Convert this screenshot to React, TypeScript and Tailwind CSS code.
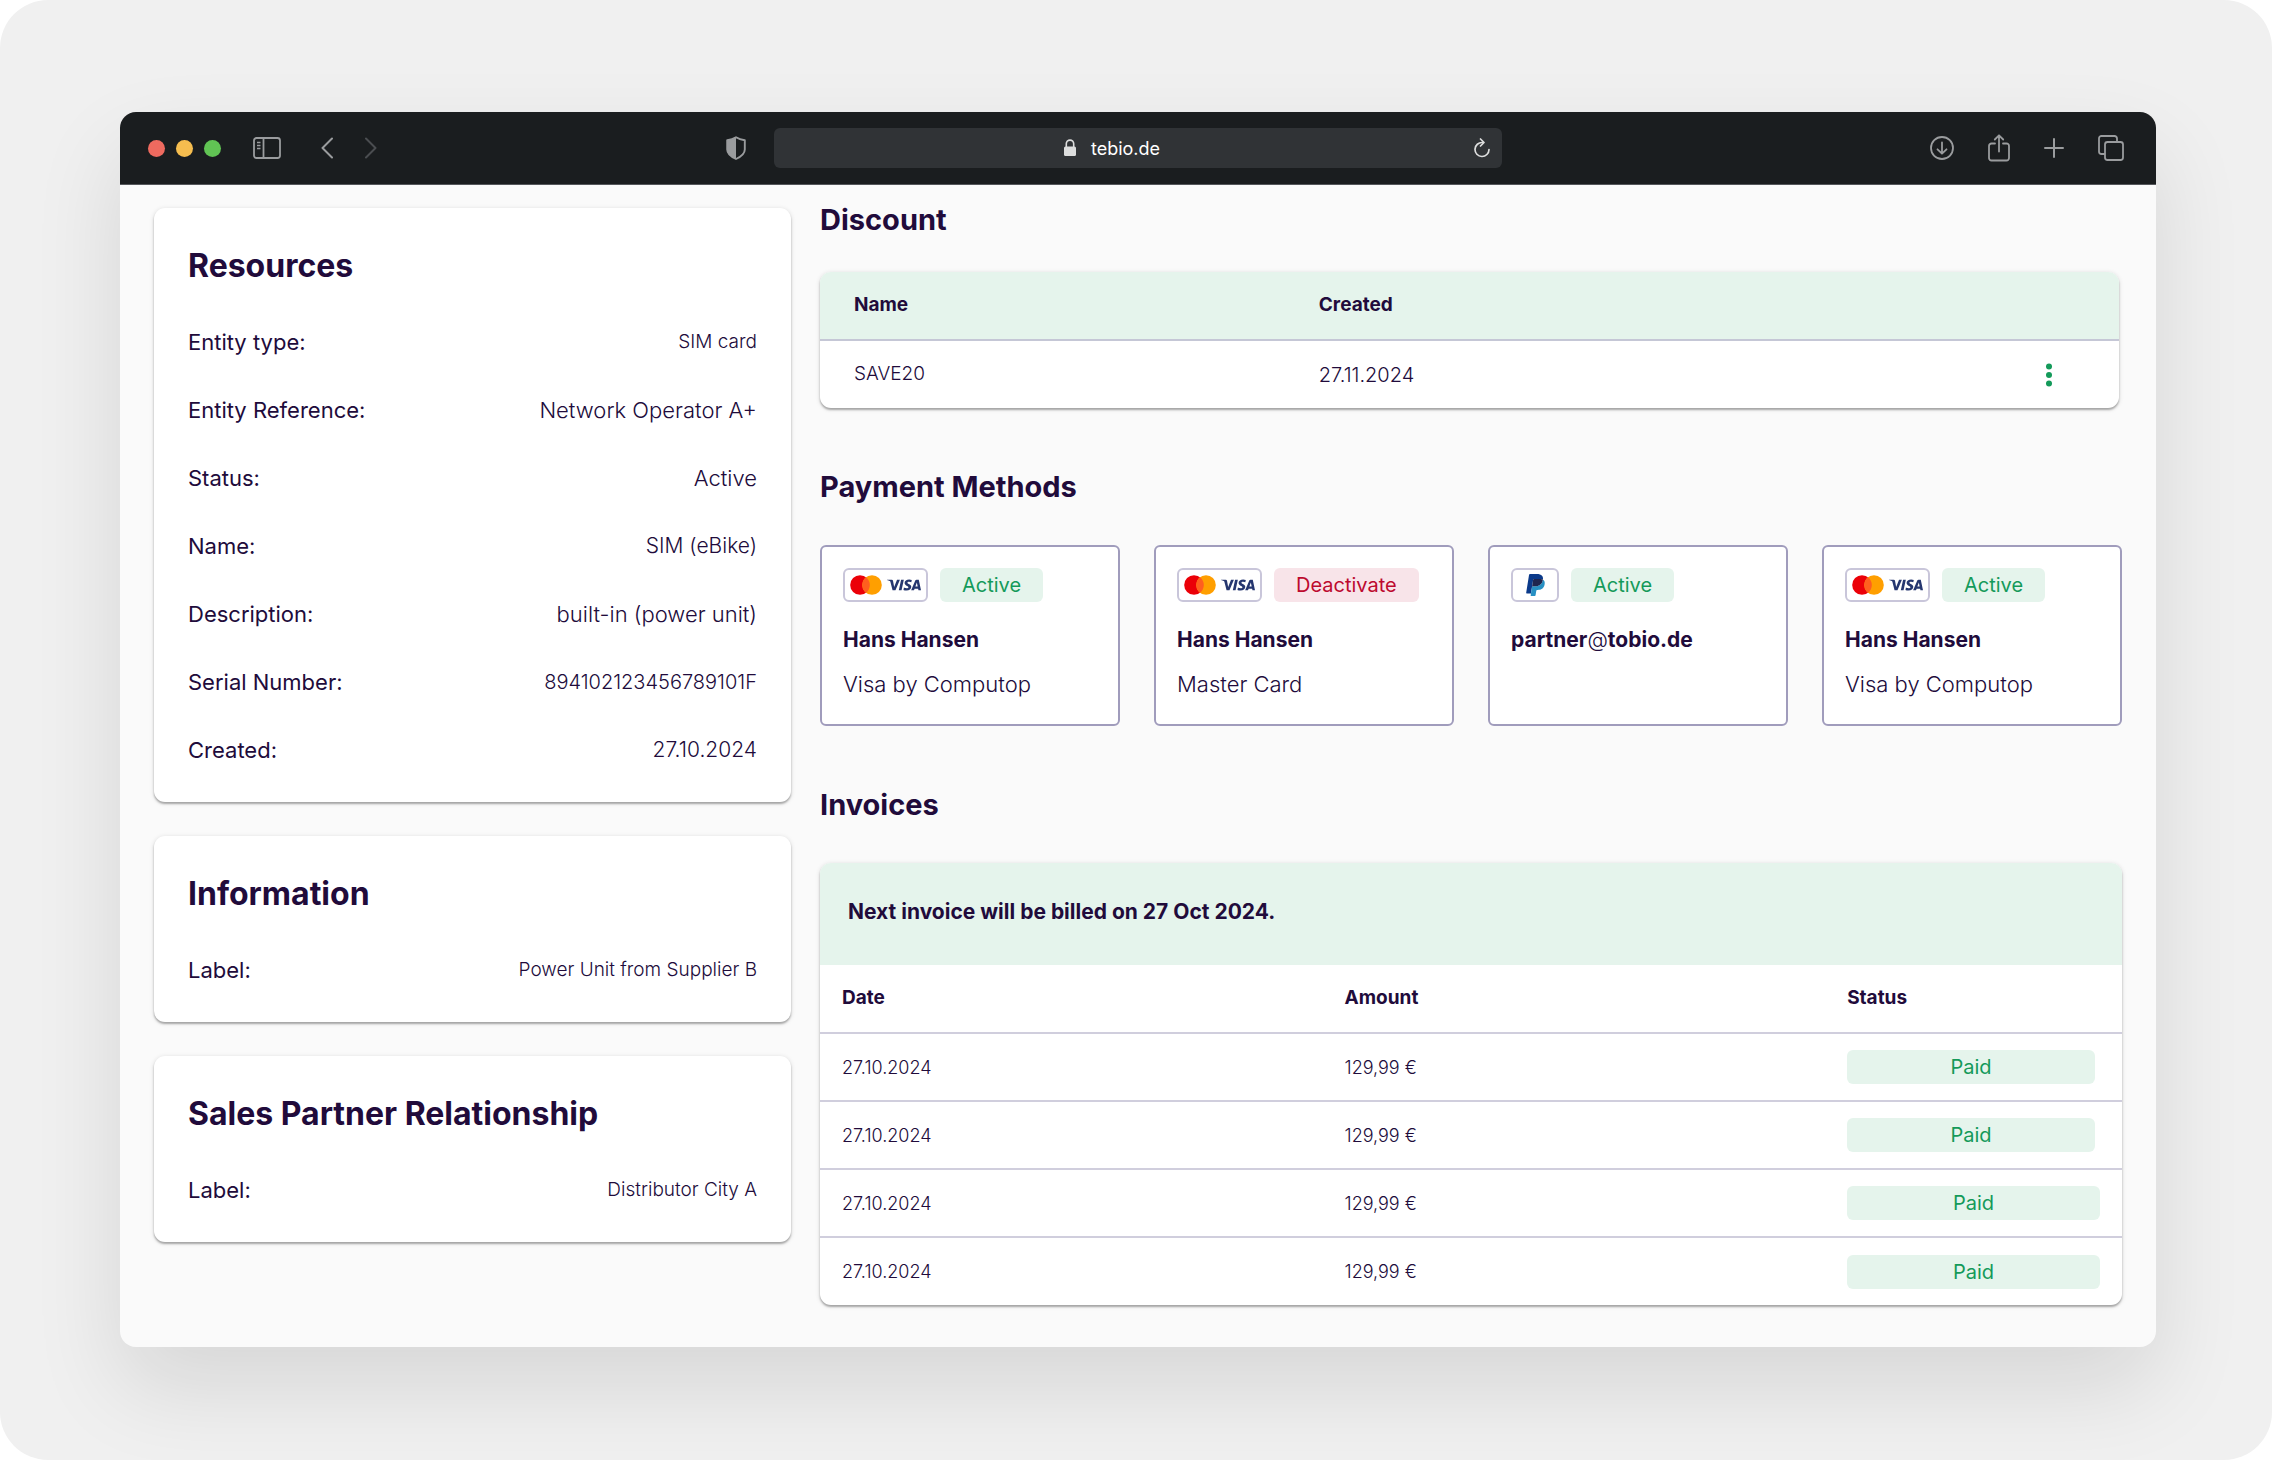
import type { ReactNode } from "react";
import clsx from "clsx";
import { SiVisa } from "react-icons/si";

const resources = [
  { label: "Entity type:", value: "SIM card", size: "text-[19px]" },
  { label: "Entity Reference:", value: "Network Operator A+", size: "text-[22px]" },
  { label: "Status:", value: "Active", size: "text-[22px]" },
  { label: "Name:", value: "SIM (eBike)", size: "text-[21px]" },
  { label: "Description:", value: "built-in (power unit)", size: "text-[22px]" },
  { label: "Serial Number:", value: "894102123456789101F", size: "text-[20px]" },
  { label: "Created:", value: "27.10.2024", size: "text-[21px]" },
];

const information = [
  { label: "Label:", value: "Power Unit from Supplier B", size: "text-[19px]" },
];

const salesPartner = [
  { label: "Label:", value: "Distributor City A", size: "text-[19px]" },
];

const payments = [
  { brand: "card", active: true, name: "Hans Hansen", detail: "Visa by Computop" },
  { brand: "card", active: false, name: "Hans Hansen", detail: "Master Card" },
  { brand: "paypal", active: true, name: "partner@tobio.de", detail: "" },
  { brand: "card", active: true, name: "Hans Hansen", detail: "Visa by Computop" },
];

const invoices = [
  { date: "27.10.2024", amount: "129,99 €", wide: false },
  { date: "27.10.2024", amount: "129,99 €", wide: false },
  { date: "27.10.2024", amount: "129,99 €", wide: true },
  { date: "27.10.2024", amount: "129,99 €", wide: true },
];

const cardShadow =
  "shadow-[0_2px_2px_rgba(0,0,0,0.28),0_1px_5px_rgba(0,0,0,0.14)]";

function BrowserBar() {
  return (
    <header className="flex items-center h-[73px] px-7 bg-[#1a1d1f] border-b border-[#55575b] text-[#9a9c9e]">
      <div className="flex flex-1 items-center pr-1">
        <div className="flex gap-[11px]">
          <span className="w-[17px] h-[17px] rounded-full bg-[#ee6a5f]" />
          <span className="w-[17px] h-[17px] rounded-full bg-[#f5bd4f]" />
          <span className="w-[17px] h-[17px] rounded-full bg-[#61c454]" />
        </div>
        <button type="button" aria-label="Sidebar" className="ml-8">
          <svg width="28" height="22" viewBox="0 0 28 22" fill="none" stroke="currentColor" strokeWidth="1.8">
            <rect x="1" y="1" width="26" height="20" rx="2.5" />
            <path d="M10.5 1v20" />
            <path d="M4 5.5h3.5M4 8.5h3.5M4 11.5h3.5" strokeWidth="1.4" />
          </svg>
        </button>
        <button type="button" aria-label="Back" className="ml-10">
          <svg width="12" height="22" viewBox="0 0 12 22" fill="none" stroke="currentColor" strokeWidth="2" strokeLinecap="round" strokeLinejoin="round">
            <path d="M11 1.5L1.5 11l9.5 9.5" />
          </svg>
        </button>
        <button type="button" aria-label="Forward" className="ml-8 text-[#4a4d50]">
          <svg width="12" height="22" viewBox="0 0 12 22" fill="none" stroke="currentColor" strokeWidth="2" strokeLinecap="round" strokeLinejoin="round">
            <path d="M1 1.5l9.5 9.5L1 20.5" />
          </svg>
        </button>
        <button type="button" aria-label="Privacy report" className="ml-auto mr-6">
          <svg width="20" height="24" viewBox="0 0 20 24" fill="none">
            <path
              d="M10 1.2c2.6 1.7 5.4 2.6 8.8 3v9.3c0 4.2-3.4 7-8.8 9.5-5.4-2.5-8.8-5.3-8.8-9.5V4.2c3.4-.4 6.2-1.3 8.8-3z"
              stroke="currentColor"
              strokeWidth="1.9"
              strokeLinejoin="round"
            />
            <path d="M10 1.2v21.8c-5.4-2.5-8.8-5.3-8.8-9.5V4.2c3.4-.4 6.2-1.3 8.8-3z" fill="currentColor" />
          </svg>
        </button>
      </div>

      <div className="flex items-center w-[728px] h-10 px-3 rounded-md bg-[#303336] text-[#dcdddd]">
        <div className="flex flex-1 items-center justify-center gap-[15px] pr-9">
          <svg width="12" height="18" viewBox="0 0 12 18" fill="none">
            <rect x="0" y="7.5" width="12" height="9.5" rx="1.5" fill="currentColor" />
            <path d="M2.3 8V4.800a3.7 3.7 0 0 1 7.4 0V8" stroke="currentColor" strokeWidth="1.6" />
          </svg>
          <span className="text-[18px] text-white">tebio.de</span>
        </div>
        <button type="button" aria-label="Reload">
          <svg width="16" height="20" viewBox="0 0 16 20" fill="none" stroke="currentColor" strokeWidth="1.7" strokeLinecap="round" strokeLinejoin="round">
            <path d="M8.5 4.5a7 7 0 1 0 6.5 7" />
            <path d="M6.5 1l3.5 3.5L6.5 8" />
          </svg>
        </button>
      </div>

      <div className="flex flex-1 items-center justify-end gap-[34px] pr-1">
        <button type="button" aria-label="Downloads">
          <svg width="24" height="24" viewBox="0 0 24 24" fill="none" stroke="currentColor" strokeWidth="1.8" strokeLinecap="round" strokeLinejoin="round">
            <circle cx="12" cy="12" r="11" />
            <path d="M12 6.5v11M7.5 13.3l4.5 4.4 4.5-4.4" />
          </svg>
        </button>
        <button type="button" aria-label="Share">
          <svg width="22" height="28" viewBox="0 0 22 28" fill="none" stroke="currentColor" strokeWidth="1.8" strokeLinecap="round" strokeLinejoin="round">
            <path d="M7 9.5H3.5A2.5 2.5 0 0 0 1 12v12a2.5 2.5 0 0 0 2.5 2.5h15A2.5 2.5 0 0 0 21 24V12a2.5 2.5 0 0 0-2.5-2.5H15" />
            <path d="M11 17.5V1.5M6.8 5.5L11 1.3l4.2 4.2" />
          </svg>
        </button>
        <button type="button" aria-label="New tab">
          <svg width="20" height="20" viewBox="0 0 20 20" stroke="currentColor" strokeWidth="2" strokeLinecap="round">
            <path d="M10 1v18M1 10h18" />
          </svg>
        </button>
        <button type="button" aria-label="Tab overview">
          <svg width="26" height="26" viewBox="0 0 26 26" fill="none" stroke="currentColor" strokeWidth="1.8" strokeLinejoin="round">
            <rect x="7" y="7" width="18" height="18" rx="2.5" />
            <path d="M7 19H3.5A2.5 2.5 0 0 1 1 16.5v-13A2.5 2.5 0 0 1 3.5 1h13A2.5 2.5 0 0 1 19 3.5V7" />
          </svg>
        </button>
      </div>
    </header>
  );
}

type Detail = { label: string; value: string; size: string };

function DetailCard({ title, items }: { title: string; items: Detail[] }) {
  return (
    <section className={clsx("bg-white rounded-[11px] px-[34px] pt-[34px] pb-[18px]", cardShadow)}>
      <h2 className="text-[32px] leading-12 font-bold mb-[18px]">{title}</h2>
      <dl>
        {items.map((item) => (
          <div key={item.label} className="flex items-center justify-between h-[68px]">
            <dt className="text-[22px]">{item.label}</dt>
            <dd className={clsx("font-light", item.size)}>{item.value}</dd>
          </div>
        ))}
      </dl>
    </section>
  );
}

function SectionTitle({ children }: { children: ReactNode }) {
  return <h2 className="text-[29px] leading-10 font-bold">{children}</h2>;
}

function CardLogo() {
  return (
    <span className="flex items-center justify-between w-[85px] h-[34px] px-[5px] bg-white border-2 border-[#c9c6da] rounded-md">
      <svg width="32" height="20" viewBox="0 0 32 20" aria-label="Mastercard">
        <circle cx="10" cy="10" r="9.8" fill="#eb0008" />
        <circle cx="22" cy="10" r="9.8" fill="#ff9f00" />
        <path d="M16 2.25a9.8 9.8 0 0 1 0 15.5a9.8 9.8 0 0 1 0-15.5z" fill="#ff5f1f" />
      </svg>
      <SiVisa className="w-[34px] h-[34px] text-[#25366f]" aria-label="Visa" />
    </span>
  );
}

function PaypalLogo() {
  return (
    <span className="flex items-center justify-center w-12 h-[34px] bg-white border-2 border-[#c9c6da] rounded-md">
      <svg width="19" height="22" viewBox="0 0 256 302" aria-label="PayPal">
        <path
          d="M102.397 68.840a11.737 11.737 0 0 1 5.053-1.140h73.318c8.682 0 16.780.565 24.180 1.756a101.600 101.600 0 0 1 6.177 1.182 89.928 89.928 0 0 1 8.590 2.347c3.638 1.215 7.026 2.630 10.140 4.287 3.670-23.416-.026-39.340-12.687-53.765C203.226 7.625 178.046.816 145.823.816H52.295C45.710.816 40.108 5.610 39.076 12.110L.136 259.068c-.774 4.878 2.997 9.282 7.925 9.282h57.744L95.888 77.580a11.717 11.717 0 0 1 6.509-8.740z"
          fill="#0b3a8a"
        />
        <path
          d="M228.897 82.749c-12.328 63.320-54.530 85.221-108.429 85.221H93.024c-6.584 0-12.145 4.795-13.168 11.296L61.817 293.621c-.674 4.262 2.622 8.124 6.934 8.124h48.670a11.710 11.710 0 0 0 11.563-9.880l.474-2.480 9.173-58.136.591-3.213a11.710 11.710 0 0 1 11.562-9.880h7.284c47.147 0 84.064-19.154 94.852-74.550 4.503-23.150 2.173-42.478-9.739-56.054-3.613-4.112-8.100-7.508-13.327-10.280-.283 1.790-.590 3.604-.957 5.477z"
          fill="#2790c3"
        />
        <path
          d="M216.952 72.128a89.928 89.928 0 0 0-5.818-1.490 109.904 109.904 0 0 0-6.177-1.174c-7.408-1.199-15.500-1.765-24.190-1.765h-73.309a11.570 11.570 0 0 0-5.053 1.149 11.683 11.683 0 0 0-6.510 8.740l-15.582 98.798-.450 2.880c1.025-6.501 6.585-11.296 13.170-11.296h27.444c53.898 0 96.100-21.892 108.428-85.221.367-1.873.675-3.688.958-5.477-3.122-1.648-6.501-3.072-10.140-4.279a83.260 83.260 0 0 0-2.770-.865"
          fill="#1f264f"
        />
      </svg>
    </span>
  );
}

function DiscountTable() {
  return (
    <div className={clsx("mr-[3px] rounded-[11px] overflow-hidden bg-white", cardShadow)}>
      <table className="w-full table-fixed text-left">
        <thead>
          <tr className="h-[68px] bg-[#e5f4ec] border-b-2 border-[#c5c7d6] text-[19px]">
            <th className="w-[38.4%] pl-[34px] font-bold">Name</th>
            <th className="font-bold">Created</th>
            <th className="w-36" aria-label="Actions" />
          </tr>
        </thead>
        <tbody>
          <tr className="h-[68px] font-light">
            <td className="pl-[34px] text-[19px]">SAVE20</td>
            <td className="text-[20px]">27.11.2024</td>
            <td>
              <button type="button" aria-label="More" className="block ml-[66px] px-1 text-[#149a5a]">
                <svg width="8" height="24" viewBox="0 0 8 24" fill="currentColor">
                  <circle cx="4" cy="3.5" r="3" />
                  <circle cx="4" cy="12" r="3" />
                  <circle cx="4" cy="20.5" r="3" />
                </svg>
              </button>
            </td>
          </tr>
        </tbody>
      </table>
    </div>
  );
}

function PaymentCards() {
  return (
    <div className="grid grid-cols-4 gap-[34px]">
      {payments.map((payment, i) => {
        const [user, domain] = payment.name.split("@");
        return (
          <article key={i} className="h-[181px] px-[21px] pt-[21px] bg-white border-2 border-[#a09cbc] rounded-md">
            <div className="flex gap-3">
              {payment.brand === "card" ? <CardLogo /> : <PaypalLogo />}
              <span
                className={clsx(
                  "flex items-center h-[34px] px-[22px] rounded-md text-[20px]",
                  payment.active ? "bg-[#e5f4ec] text-[#149a5a]" : "bg-[#f8e4e9] text-[#bd0a2f]"
                )}
              >
                {payment.active ? "Active" : "Deactivate"}
              </span>
            </div>
            <h3 className="mt-5 text-[21px] leading-9 font-bold">
              {user}
              {domain && (
                <>
                  <span className="font-light">@</span>
                  {domain}
                </>
              )}
            </h3>
            <p className="mt-2 text-[22px] leading-9 font-light">{payment.detail}</p>
          </article>
        );
      })}
    </div>
  );
}

function InvoiceTable() {
  return (
    <div className={clsx("rounded-[11px] overflow-hidden bg-white", cardShadow)}>
      <p className="flex items-center h-[102px] px-7 pb-1 bg-[#e5f4ec] text-[21px] font-bold">
        Next invoice will be billed on 27 Oct 2024.
      </p>
      <table className="w-full table-fixed text-left">
        <thead>
          <tr className="h-[68px] text-[19px]">
            <th className="w-[38.6%] pl-[22px] font-bold">Date</th>
            <th className="w-[38.6%] pl-[22px] font-bold">Amount</th>
            <th className="pl-[22px] font-bold">Status</th>
          </tr>
        </thead>
        <tbody className="text-[18px] font-light">
          {invoices.map((invoice, i) => (
            <tr key={i} className="h-[68px] border-t-2 border-[#d0cedd]">
              <td className="pl-[22px]">{invoice.date}</td>
              <td className="pl-[22px]">{invoice.amount}</td>
              <td className={clsx("pl-[22px]", invoice.wide ? "pr-[22px]" : "pr-[27px]")}>
                <span className="block h-[34px] leading-[34px] rounded-md bg-[#e5f4ec] text-center text-[20px] font-normal text-[#149a5a]">
                  Paid
                </span>
              </td>
            </tr>
          ))}
        </tbody>
      </table>
    </div>
  );
}

export default function App() {
  return (
    <div className="min-h-screen bg-white">
      <div className="min-h-screen pt-28 pb-28 pl-[120px] pr-[116px] rounded-[48px] bg-[#f0f0f0] font-['Inter',sans-serif] text-[#210b3b]">
        <div className="rounded-2xl overflow-hidden bg-[#fafafa] shadow-[0_40px_90px_rgba(0,0,0,0.11)]">
          <BrowserBar />
          <main className="flex gap-[29px] pl-[34px] pr-[34px] pb-[42px]">
            <div className="w-[637px] shrink-0 flex flex-col gap-[34px] pt-[23px]">
              <DetailCard title="Resources" items={resources} />
              <DetailCard title="Information" items={information} />
              <DetailCard title="Sales Partner Relationship" items={salesPartner} />
            </div>
            <div className="flex-1 min-w-0 flex flex-col pt-[15px]">
              <SectionTitle>Discount</SectionTitle>
              <div className="mt-8 mb-[59px]">
                <DiscountTable />
              </div>
              <SectionTitle>Payment Methods</SectionTitle>
              <div className="mt-[38px] mb-[59px]">
                <PaymentCards />
              </div>
              <SectionTitle>Invoices</SectionTitle>
              <div className="mt-[38px]">
                <InvoiceTable />
              </div>
            </div>
          </main>
        </div>
      </div>
    </div>
  );
}
